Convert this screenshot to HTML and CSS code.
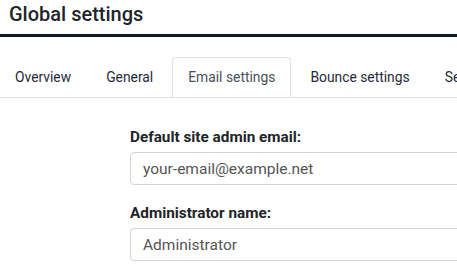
FILE: index.html
```html
<!DOCTYPE html>
<html lang="en">
<head>
    <meta charset="UTF-8">
    <meta name="viewport" content="width=device-width, initial-scale=1.0">
    <title>Global settings</title>
    <link rel="stylesheet" href="styles.css">
</head>
<body>

    <div class="page-header">
        <h1>Global settings</h1>
    </div>

    <!-- Settings tabs -->
    <ul class="nav-tabs">
        <li class="tab">Overview</li>
        <li class="tab">General</li>
        <li class="tab active">Email settings</li>
        <li class="tab">Bounce settings</li>
        <li class="tab">Security</li>
    </ul>

    <!-- Email settings form -->
    <form class="settings-form">
        <div class="form-group">
            <label for="siteadminemail">Default site admin email:</label>
            <input type="text" id="siteadminemail" name="siteadminemail" value="your-email@example.net">
        </div>

        <div class="form-group">
            <label for="siteadminname">Administrator name:</label>
            <input type="text" id="siteadminname" name="siteadminname" value="Administrator">
        </div>
    </form>

</body>
</html>
```

FILE: styles.css
```css
body {
    font-family: Roboto, "Liberation Sans", sans-serif;
    margin: 0;
    padding: 0;
    width: 457px;
    height: 277px;
    overflow: hidden;
    background: #fff;
    color: #212529;
}
.page-header {
    padding: 2px 9px 7px;
    border-bottom: 3px solid #0f1b2d;
}
.page-header h1 {
    margin: 0;
    font-size: 20px;
    font-weight: 500;
    line-height: 25px;
    color: #212529;
}
.nav-tabs {
    display: flex;
    gap: 3px;
    list-style: none;
    margin: 20px 0 0;
    padding: 0;
    border-bottom: 1px solid #dee2e6;
    white-space: nowrap;
    overflow: hidden;
}
.tab {
    flex-shrink: 0;
    padding: 9px 15px;
    margin-bottom: -1px;
    font-size: 13.85px;
    line-height: 21px;
    color: #1f2a3a;
    border: 1px solid transparent;
    border-radius: 4px 4px 0 0;
}
.tab:first-child {
    margin-left: -1px;
}
.tab.active {
    color: #495057;
    border-color: #dee2e6 #dee2e6 #fff;
    background: #fff;
}
.settings-form {
    margin: 29px 0 0 130px;
    width: 420px;
}
.form-group {
    margin-bottom: 18px;
}
label {
    display: block;
    font-size: 15.3px;
    font-weight: 700;
    line-height: 20px;
    margin-bottom: 5px;
}
input {
    display: block;
    box-sizing: border-box;
    width: 100%;
    height: 33px;
    padding: 0 12px;
    font-family: Roboto, "Liberation Sans", sans-serif;
    font-size: 15.5px;
    color: #555;
    border: 1px solid #ced4da;
    border-radius: 4px;
    background: #fff;
}
```
